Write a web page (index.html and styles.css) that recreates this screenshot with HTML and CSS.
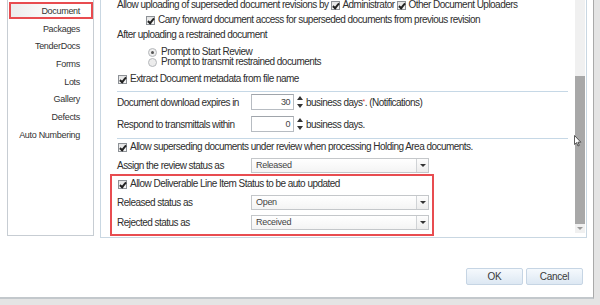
FILE: index.html
```html
<!DOCTYPE html>
<html>
<head>
<meta charset="utf-8">
<link rel="stylesheet" href="styles.css">
</head>
<body>
<div class="screen">
  <div class="dialog">
    <div class="main">
      <nav class="sidebar">
        <div class="nav-item active">Document</div>
        <div class="nav-item">Packages</div>
        <div class="nav-item">TenderDocs</div>
        <div class="nav-item">Forms</div>
        <div class="nav-item">Lots</div>
        <div class="nav-item">Gallery</div>
        <div class="nav-item">Defects</div>
        <div class="nav-item">Auto Numbering</div>
      </nav>
      <section class="panel">
        <div class="content">
          <div class="row r1">Allow uploading of superseded document revisions by <span class="cb on"></span>Administrator <span class="cb on"></span>Other Document Uploaders</div>
          <div class="row r2 indent"><span class="cb on"></span>Carry forward document access for superseded documents from previous revision</div>
          <div class="row r3">After uploading a restrained document</div>
          <div class="radios">
            <div class="rrow"><span class="rb on"></span>Prompt to Start Review</div>
            <div class="rrow"><span class="rb"></span>Prompt to transmit restrained documents</div>
          </div>
          <div class="row r6"><span class="cb on"></span>Extract Document metadata from file name</div>
          <div class="sep s1"></div>
          <div class="frow f1">
            <span class="label">Document download expires in</span>
            <span class="num">30</span><span class="spin"><i class="up"></i><i class="dn"></i></span>
            <span class="after">business days<sup class="req">*</sup>. (Notifications)</span>
          </div>
          <div class="frow f2">
            <span class="label">Respond to transmittals within</span>
            <span class="num">0</span><span class="spin"><i class="up"></i><i class="dn"></i></span>
            <span class="after">business days.</span>
          </div>
          <div class="sep s2"></div>
          <div class="row r11"><span class="cb on"></span>Allow superseding documents under review when processing Holding Area documents.</div>
          <div class="frow f3">
            <span class="label">Assign the review status as</span>
            <span class="select"><span class="val">Released</span><span class="drop"><i></i></span></span>
          </div>
          <div class="highlight">
            <div class="row hr1"><span class="cb on"></span>Allow Deliverable Line Item Status to be auto updated</div>
            <div class="frow h2">
              <span class="label">Released status as</span>
              <span class="select"><span class="val">Open</span><span class="drop"><i></i></span></span>
            </div>
            <div class="frow h3">
              <span class="label">Rejected status as</span>
              <span class="select"><span class="val">Received</span><span class="drop"><i></i></span></span>
            </div>
          </div>
        </div>
        <div class="scrollbar">
          <div class="track-top"></div>
          <div class="thumb"></div>
          <div class="track-bottom"><i class="sarrow"></i></div>
        </div>
      </section>
    </div>
    <div class="buttons">
      <button class="btn">OK</button>
      <button class="btn">Cancel</button>
    </div>
  </div>
  <svg class="cursor" width="8" height="12" viewBox="0 0 8 12"><path d="M0.5 0.5 L0.5 9.5 L2.6 7.6 L4 11 L5.3 10.4 L3.9 7.2 L6.8 7.2 Z" fill="#fff" stroke="#333" stroke-width="0.8" stroke-linejoin="round"/></svg>
</div>
</body>
</html>
```
FILE: styles.css
```css
* { box-sizing: border-box; }
html, body { margin: 0; padding: 0; }
body {
  font-family: "Liberation Sans", Arial, sans-serif;
  font-size: 10px;
  letter-spacing: -0.53px;
  color: #2e2e2e;
  background: #fff;
}
.screen {
  position: relative;
  width: 600px;
  height: 305px;
  overflow: hidden;
  background: #e4e4e4;
}
.dialog {
  width: 594px;
  height: 299px;
  background: #fff;
  border-right: 1px solid #a9a9a9;
  border-bottom: 2px solid #c3c8cc;
  display: flex;
  flex-direction: column;
}
.main {
  display: flex;
  padding-left: 7px;
  gap: 6px;
}
.sidebar {
  width: 87px;
  height: 236px;
  border: 1px solid #c7cdd3;
  border-top: none;
  display: flex;
  flex-direction: column;
  padding-top: 2px;
  font-size: 9px;
  letter-spacing: -0.3px;
}
.nav-item {
  height: 17.7px;
  line-height: 17px;
  text-align: right;
  padding-right: 13px;
  color: #333;
  white-space: nowrap;
}
.nav-item.active {
  margin: 0 0 1.5px 1px;
  height: 17px;
  border: 2px solid #e84c50;
  background: linear-gradient(to right, #ececec, #ffffff 60%);
  padding-right: 11px;
  line-height: 14px;
}
.panel {
  width: 487px;
  height: 238px;
  border: 1px solid #c9d7e2;
  border-top: none;
  display: flex;
}
.content {
  flex: 1;
  padding-left: 16px;
  display: flex;
  flex-direction: column;
  align-items: flex-start;
}
.row {
  height: 12px;
  line-height: 12px;
  display: flex;
  align-items: center;
  white-space: nowrap;
}
.r1 { margin-top: -1px; }
.r2 { margin-top: 3px; }
.r3 { margin-top: 3px; }
.indent { padding-left: 28px; }
.cb {
  display: inline-block;
  width: 9px;
  height: 9px;
  border: 1px solid #8d9196;
  background: linear-gradient(#e4e4e4, #f7f7f7);
  margin-right: 3px;
  margin-left: 1px;
  position: relative;
  flex: none;
}
.cb.on::after {
  content: "";
  position: absolute;
  left: 2px;
  top: 0px;
  width: 2px;
  height: 5px;
  border: solid #222;
  border-width: 0 2px 2px 0;
  transform: rotate(40deg);
}
.r1 .cb { margin-left: 3px; margin-right: 2px; }
.radios {
  margin-top: 6px;
  padding-left: 31px;
  display: flex;
  flex-direction: column;
}
.rrow {
  height: 10px;
  line-height: 10px;
  display: flex;
  align-items: center;
  white-space: nowrap;
}
.rb {
  display: inline-block;
  width: 9px;
  height: 9px;
  border-radius: 50%;
  border: 1px solid #b5b8bc;
  background: #ececec;
  margin-right: 4px;
  position: relative;
  flex: none;
}
.rb.on::after {
  content: "";
  position: absolute;
  left: 2px;
  top: 2px;
  width: 3px;
  height: 3px;
  border-radius: 50%;
  background: #555;
}
.r6 { margin-top: 6px; }
.sep {
  align-self: stretch;
  height: 1px;
  background: #c6d8e6;
  margin-right: 7px;
}
.s1 { margin-top: 6px; }
.s2 { margin-top: 6px; }
.frow {
  display: flex;
  align-items: center;
  white-space: nowrap;
  height: 16px;
}
.label {
  width: 134px;
  flex: none;
}
.f1 { margin-top: 2px; }
.f2 { margin-top: 6px; }
.num {
  width: 43px;
  height: 16px;
  border: 1px solid #b7bcc2;
  border-top-color: #a0a5ab;
  text-align: right;
  padding-right: 3px;
  line-height: 14px;
  font-size: 9px;
  color: #444;
}
.spin {
  width: 7px;
  height: 12px;
  margin-left: 2px;
  display: flex;
  flex-direction: column;
  justify-content: space-between;
  align-items: center;
}
.spin i {
  display: block;
  width: 0;
  height: 0;
  border-left: 3px solid transparent;
  border-right: 3px solid transparent;
}
.spin .up { border-bottom: 4px solid #333; }
.spin .dn { border-top: 4px solid #333; }
.after { margin-left: 3px; }
.req { color: #e53935; font-size: 7px; vertical-align: 2px; line-height: 0; }
.r11 { margin-top: 2px; }
.f3 { margin-top: 5px; height: 15px; }
.select {
  width: 178px;
  height: 15px;
  border: 1px solid #c4c7ca;
  background: linear-gradient(#ffffff, #f4f4f4);
  display: flex;
  align-items: stretch;
}
.val {
  flex: 1;
  padding-left: 4px;
  font-size: 9px;
  letter-spacing: -0.3px;
  line-height: 13px;
  color: #444;
}
.drop {
  width: 12px;
  border-left: 1px solid #d0d3d6;
  background: linear-gradient(#fdfdfd, #ececec);
  display: flex;
  align-items: center;
  justify-content: center;
}
.drop i {
  width: 0;
  height: 0;
  border-left: 3px solid transparent;
  border-right: 3px solid transparent;
  border-top: 3px solid #333;
}
.highlight {
  margin-top: 1px;
  margin-left: -7px;
  width: 324px;
  height: 62px;
  border: 2px solid #e84c50;
  padding: 2px 0 0 5px;
  display: flex;
  flex-direction: column;
}
.h2 { margin-top: 5px; height: 15px; }
.h3 { margin-top: 5px; height: 15px; }
.scrollbar {
  width: 10px;
  margin-right: 1px;
  height: 233px;
  display: flex;
  flex-direction: column;
}
.track-top { height: 76px; background: #f0f0f0; }
.thumb { height: 148px; background: #a8a8a8; }
.track-bottom {
  flex: 1;
  background: #f0f0f0;
  display: flex;
  align-items: center;
  justify-content: center;
}
.sarrow {
  width: 0;
  height: 0;
  border-left: 3px solid transparent;
  border-right: 3px solid transparent;
  border-top: 3px solid #9a9a9a;
}
.buttons {
  margin-top: 30px;
  display: flex;
  justify-content: flex-end;
  gap: 3px;
  padding-right: 10px;
}
.btn {
  width: 57px;
  height: 17px;
  border: 1px solid #c6d5e4;
  border-radius: 2px;
  background: linear-gradient(#f5f9fd, #dde8f3);
  font-family: "Liberation Sans", Arial, sans-serif;
  font-size: 10px;
  letter-spacing: -0.3px;
  color: #3a3a3a;
  padding: 0;
}
.cursor {
  position: absolute;
  left: 574px;
  top: 135px;
}
```
